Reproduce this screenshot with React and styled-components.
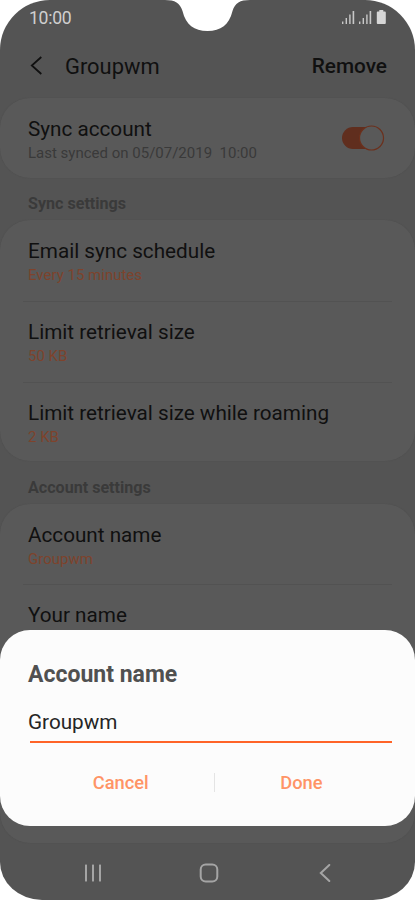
import React, { useState } from 'react';
import styled, { createGlobalStyle } from 'styled-components';

/*──────── tokens ────────*/
const INK    = '#101010';
const SHADE  = '#545454';
const PANEL  = '#595959';
const MUTED  = '#3a3a3a';
const ACCENT = '#7e432c';

const SYNC_ROWS = [
  { title: 'Email sync schedule', value: 'Every 15 minutes' },
  { title: 'Limit retrieval size', value: '50 KB' },
  { title: 'Limit retrieval size while roaming', value: '2 KB' },
];

/*──────── styled shells ────────*/
const GlobalStyle = createGlobalStyle`
  *{box-sizing:border-box;}
  body{margin:0;background:#fff;font-family:Roboto,'Liberation Sans',sans-serif;}
  button,input{font:inherit;border:0;background:none;padding:0;margin:0;outline:0;}
  svg{display:block;}
`;
const Screen = styled.div`
  position:relative;width:415px;height:900px;overflow:hidden;
  display:flex;flex-direction:column;background:${SHADE};
  border-radius:50px 50px 42px 42px / 50px 50px 38px 38px;
`;
const StatusBar = styled.div`
  flex:0 0 36px;display:flex;justify-content:space-between;
  padding:8px 28px 0 29px;
`;
const Clock = styled.span`
  font-size:17.6px;line-height:20px;letter-spacing:-.3px;color:#cfcfcf;
`;
const Notch = styled.svg`position:absolute;left:165px;top:0;`;
const StatusIcons = styled.svg`margin-top:1px;`;
const Header = styled.header`
  flex:0 0 62px;display:flex;align-items:center;
  padding:0 28px 2px 30px;color:${INK};
`;
const BackIcon = styled.svg`margin-bottom:2px;`;
const HeaderTitle = styled.h1`
  margin:1px 0 0 22px;flex:1;font-size:21.9px;font-weight:400;line-height:26px;
`;
const RemoveButton = styled.button`
  font-size:20.8px;font-weight:500;line-height:26px;color:${INK};
`;
const Card = styled.section`
  flex:0 0 ${(p) => p.$height}px;padding:0 23px;
  background:${PANEL};border-radius:30px;overflow:hidden;
  box-shadow:0 0 1px #4a4a4a;
`;
const Row = styled.div`
  height:80.75px;display:flex;justify-content:space-between;align-items:flex-start;
  padding:19px 0 0 5px;
  & + &{border-top:1px solid #525252;padding-top:18px;}
`;
const RowTitle = styled.div`font-size:20.7px;line-height:24px;color:${INK};`;
const RowValue = styled.div`
  font-size:15px;line-height:18px;margin-top:3px;white-space:pre;
  color:${(p) => (p.$muted ? MUTED : ACCENT)};
`;
const SectionLabel = styled.h2`
  flex:0 0 ${(p) => p.$height}px;margin:0;padding:${(p) => p.$top || 16}px 28px 0;
  font-size:16.1px;font-weight:700;line-height:20px;color:${MUTED};
`;
const Toggle = styled.button`
  width:43px;height:26px;margin:8px 7px 0 0;
`;
const NavBar = styled.nav`
  flex:0 0 57px;display:flex;justify-content:space-between;align-items:center;
  padding:2px 84px 0;
`;
const HomeIcon = styled.svg`margin-right:4px;`;
const Dialog = styled.div`
  position:absolute;left:0;right:0;top:629.5px;height:196.5px;
  display:flex;flex-direction:column;padding:31px 23px 0 28px;
  background:#fcfcfc;border-radius:30px;
`;
const DialogTitle = styled.h2`
  margin:0;font-size:23px;font-weight:700;line-height:28px;color:#505050;
`;
const Field = styled.input`
  height:30px;margin-top:18px;font-size:20.7px;line-height:24px;color:#252525;
`;
const Underline = styled.div`height:1.5px;margin:4.5px 0 0 2px;background:#ff6428;`;
const Actions = styled.div`
  display:flex;align-items:center;margin:30px 0 0 0;height:20px;
`;
const Action = styled.button`
  flex:0 0 ${(p) => p.$width}px;font-size:18.3px;font-weight:500;line-height:20px;color:#ff9466;
`;
const Split = styled.i`width:1px;height:19px;background:#e4e4e4;`;

/*──────── parts ────────*/
function SignalIcons() {
  return (
    <StatusIcons width="46" height="16" viewBox="0 0 46 16" fill="#c8c8c8">
      {[1, 18].map((x) => (
        <g key={x} transform={`translate(${x} 0)`}>
          <rect x="0" y="12.5" width="1.4" height="2.5" />
          <rect x="3.6" y="9" width="1.4" height="6" />
          <rect x="7.2" y="5.5" width="1.4" height="9.5" />
          <rect x="10.6" y="2" width="1.6" height="13" />
        </g>
      ))}
      <path d="M38.3 1h4v1.5h1.6q.9 0 .9.9v10.7q0 .9-.9.9h-7.2q-.9 0-.9-.9V3.4q0-.9.9-.9h1.6z" fill="#d6d6d6" />
    </StatusIcons>
  );
}

function SettingRow({ title, value, muted, children }) {
  return (
    <Row>
      <div>
        <RowTitle>{title}</RowTitle>
        {value && <RowValue $muted={muted}>{value}</RowValue>}
      </div>
      {children}
    </Row>
  );
}

/*──────── component ────────*/
export default function App() {
  const [name, setName] = useState('Groupwm');

  return (
    <>
      <GlobalStyle />
      <Screen>
        <StatusBar>
          <Clock>10:00</Clock>
          <SignalIcons />
        </StatusBar>
        <Notch width="85" height="32" viewBox="0 0 85 32">
          <path d="M0 0C10 0 15 3 17.5 11C21 25 29 31 42.5 31S64 25 67.5 11C70 3 75 0 85 0Z" fill="#fff" />
        </Notch>

        <Header>
          <BackIcon width="13" height="19" viewBox="0 0 13 19" fill="none" stroke={INK} strokeWidth="1.8">
            <path d="M11.3 1L1.8 9.5L11.3 18" />
          </BackIcon>
          <HeaderTitle>Groupwm</HeaderTitle>
          <RemoveButton>Remove</RemoveButton>
        </Header>

        <Card $height={80}>
          <SettingRow title="Sync account" value="Last synced on 05/07/2019  10:00" muted>
            <Toggle aria-label="Sync account">
              <svg width="43" height="26" viewBox="0 0 43 26">
                <rect x="0" y="2" width="40" height="22" rx="11" fill="#602e1e" />
                <circle cx="29.5" cy="13" r="12" fill={PANEL} stroke="#6c301c" strokeWidth="1.2" />
              </svg>
            </Toggle>
          </SettingRow>
        </Card>

        <SectionLabel $height={42}>Sync settings</SectionLabel>
        <Card $height={241}>
          {SYNC_ROWS.map((r) => (
            <SettingRow key={r.title} title={r.title} value={r.value} />
          ))}
        </Card>

        <SectionLabel $height={42.5} $top={17}>Account settings</SectionLabel>
        <Card $height={339.5}>
          <SettingRow title="Account name" value="Groupwm" />
          <SettingRow title="Your name" />
        </Card>

        <NavBar>
          <svg width="18" height="18" viewBox="0 0 18 18" fill="#a5a5a5">
            <rect x="1" y="0.5" width="2" height="17" rx="0.5" />
            <rect x="8" y="0.5" width="2" height="17" rx="0.5" />
            <rect x="15" y="0.5" width="2" height="17" rx="0.5" />
          </svg>
          <HomeIcon width="20" height="20" viewBox="0 0 20 20" fill="none" stroke="#a5a5a5" strokeWidth="2">
            <rect x="1.7" y="1.5" width="16.6" height="17" rx="5" />
          </HomeIcon>
          <svg width="12" height="18" viewBox="0 0 12 18" fill="none" stroke="#a5a5a5" strokeWidth="2" strokeLinecap="round">
            <path d="M10.3 1L1.8 9L10.3 17" />
          </svg>
        </NavBar>

        <Dialog role="dialog">
          <DialogTitle>Account name</DialogTitle>
          <Field value={name} onChange={(e) => setName(e.target.value)} />
          <Underline />
          <Actions>
            <Action $width={185.6}>Cancel</Action>
            <Split />
            <Action $width={173.6}>Done</Action>
          </Actions>
        </Dialog>
      </Screen>
    </>
  );
}
